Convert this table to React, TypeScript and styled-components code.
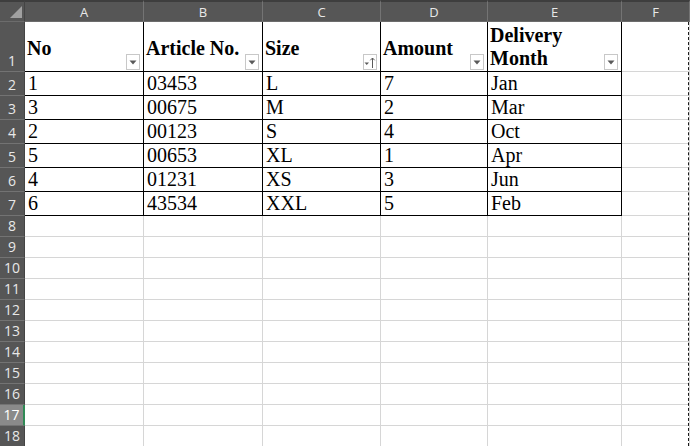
import React from 'react';
import styled, { createGlobalStyle } from 'styled-components';

const Global = createGlobalStyle`
  html, body { margin: 0; padding: 0; background: #ffffff; overflow: hidden; }
  #root { width: 690px; height: 446px; overflow: hidden; }
`;

const Sheet = styled.div`
  position: relative;
  display: grid;
  grid-template-columns: 25px 119px 119px 118px 107px 134px 68px;
  grid-template-rows: 22px 50px repeat(6, 24px) repeat(11, 21px);
  width: 690px;
  height: 446px;
  overflow: hidden;
  background: #ffffff;
`;

const Corner = styled.div`
  box-sizing: border-box;
  background: #565656;
  border-top: 2px solid #3e3e3e;
  border-right: 1px solid #444444;
  border-bottom: 1px solid #6c6c6c;
  display: flex;
  align-items: flex-end;
  justify-content: flex-end;
  padding: 0 2px 3px 0;
`;

const ColHeader = styled.div`
  box-sizing: border-box;
  background: #565656;
  border-top: 2px solid #3e3e3e;
  border-right: 1px solid #747474;
  border-bottom: 1px solid #6c6c6c;
  color: #e8e8e8;
  font-family: 'Open Sans', 'Noto Sans', sans-serif;
  font-size: 13px;
  display: flex;
  align-items: center;
  justify-content: center;
`;

const RowHeader = styled.div<{ $active?: boolean }>`
  box-sizing: border-box;
  background: ${(p) => (p.$active ? '#8a8a8a' : '#565656')};
  border-bottom: 1px solid #737373;
  border-right: ${(p) => (p.$active ? '2px solid #2f8a55' : '1px solid #444444')};
  color: ${(p) => (p.$active ? '#ffffff' : '#e8e8e8')};
  font-family: 'Open Sans', 'Noto Sans', sans-serif;
  font-size: 14px;
  line-height: 19px;
  display: flex;
  align-items: flex-end;
  justify-content: center;
  padding-bottom: 1px;
`;

const Cell = styled.div<{ $boxed?: boolean }>`
  box-sizing: border-box;
  border-right: 1px solid ${(p) => (p.$boxed ? '#000000' : '#d6d6d6')};
  border-bottom: 1px solid ${(p) => (p.$boxed ? '#000000' : '#d6d6d6')};
  font-family: 'Liberation Serif', 'Times New Roman', serif;
  font-size: 20px;
  line-height: 23px;
  color: #000000;
  padding: 0 3px;
  display: flex;
  align-items: flex-end;
  white-space: nowrap;
  overflow: hidden;
`;

const HeadCell = styled.div<{ $wrap?: boolean }>`
  position: relative;
  box-sizing: border-box;
  border-right: 1px solid #000000;
  border-bottom: 1px solid #000000;
  font-family: 'Liberation Serif', 'Times New Roman', serif;
  font-size: 20px;
  font-weight: bold;
  line-height: 23px;
  color: #000000;
  padding: ${(p) => (p.$wrap ? '1px 20px 0 2px' : '3px 20px 0 2px')};
  display: flex;
  align-items: center;
  white-space: ${(p) => (p.$wrap ? 'normal' : 'nowrap')};
`;

const FilterButton = styled.div`
  position: absolute;
  right: 3px;
  bottom: 1px;
  width: 14px;
  height: 16px;
  box-sizing: border-box;
  border: 1px solid #c8c8c8;
  background: #ffffff;
  display: flex;
  align-items: center;
  justify-content: center;
`;

const PageBreak = styled.div`
  position: absolute;
  top: 22px;
  bottom: 0;
  left: 688px;
  border-left: 1px dashed #1a1a1a;
`;

const DropIcon = () => (
  <svg width="8" height="5" viewBox="0 0 8 5">
    <path d="M0.5 0.5 L7.5 0.5 L4 4.5 Z" fill="#5a5a5a" />
  </svg>
);

const SortIcon = () => (
  <svg width="12" height="13" viewBox="0 0 12 13">
    <path d="M0.5 6.5 L5 6.5 L2.75 9 Z" fill="#5a5a5a" />
    <path d="M8.5 2 L8.5 12" stroke="#5a5a5a" strokeWidth="1" />
    <path d="M6.3 4.3 L8.5 2 L10.7 4.3" stroke="#5a5a5a" strokeWidth="1" fill="none" />
  </svg>
);

const CornerTriangle = () => (
  <svg width="12" height="12" viewBox="0 0 12 12">
    <path d="M12 0 L12 12 L0 12 Z" fill="#a0a0a0" />
  </svg>
);

const cols = ['A', 'B', 'C', 'D', 'E', 'F'];
const headers = ['No', 'Article No.', 'Size', 'Amount', 'Delivery Month'];
const rows = [
  ['1', '03453', 'L', '7', 'Jan'],
  ['3', '00675', 'M', '2', 'Mar'],
  ['2', '00123', 'S', '4', 'Oct'],
  ['5', '00653', 'XL', '1', 'Apr'],
  ['4', '01231', 'XS', '3', 'Jun'],
  ['6', '43534', 'XXL', '5', 'Feb'],
];

export default function App() {
  const empty = Array.from({ length: 11 }, (_, i) => i + 8);
  return (
    <>
      <Global />
      <Sheet>
        <Corner>
          <CornerTriangle />
        </Corner>
        {cols.map((c) => (
          <ColHeader key={c}>{c}</ColHeader>
        ))}

        <RowHeader>1</RowHeader>
        {headers.map((h, i) => (
          <HeadCell key={h} $wrap={i === 4}>
            {i === 4 ? (
              <span>
                Delivery
                <br />
                Month
              </span>
            ) : (
              h
            )}
            <FilterButton>{i === 2 ? <SortIcon /> : <DropIcon />}</FilterButton>
          </HeadCell>
        ))}
        <Cell />

        {rows.map((r, ri) => (
          <React.Fragment key={ri}>
            <RowHeader>{ri + 2}</RowHeader>
            {r.map((v, ci) => (
              <Cell key={ci} $boxed>
                {v}
              </Cell>
            ))}
            <Cell />
          </React.Fragment>
        ))}

        {empty.map((n) => (
          <React.Fragment key={n}>
            <RowHeader $active={n === 17}>{n}</RowHeader>
            {cols.map((c) => (
              <Cell key={c} />
            ))}
          </React.Fragment>
        ))}
        <PageBreak />
      </Sheet>
    </>
  );
}
